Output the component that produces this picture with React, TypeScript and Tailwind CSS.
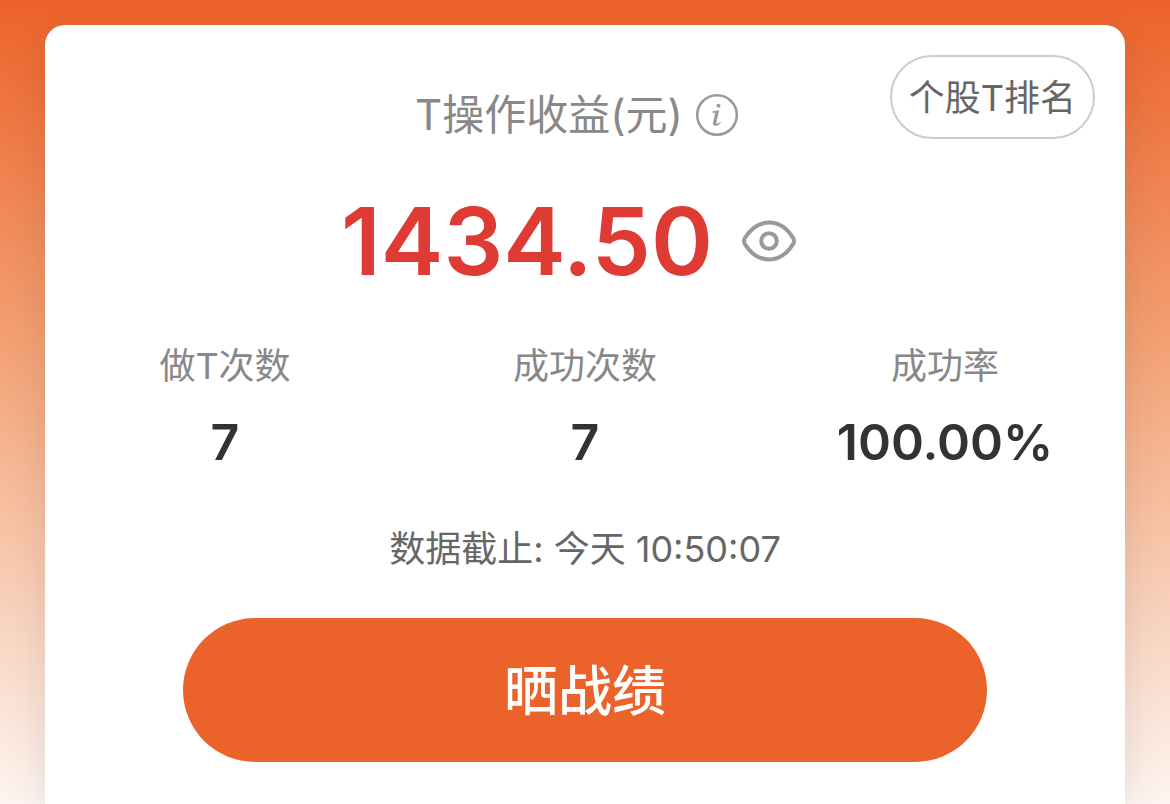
import type { ReactNode } from "react";

interface Stat {
    label: string;
    value: string;
}

const stats: Stat[] = [
    { label: "做T次数", value: "7" },
    { label: "成功次数", value: "7" },
    { label: "成功率", value: "100.00%" },
];

function IconButton({ label, children }: { label: string; children: ReactNode }) {
    return (
        <button type="button" aria-label={label} className="shrink-0">
            {children}
        </button>
    );
}

function InfoIcon() {
    return (
        <svg className="block size-11" viewBox="0 0 44 44" fill="none" aria-hidden="true">
            <circle cx="22" cy="22" r="19.800" stroke="#999" strokeWidth="2.500" />
            <circle cx="23.500" cy="12.800" r="2" fill="#999" />
            <path
                d="M17.500 19.500L18 18.300C20 18.300 22 18 23.800 17.600L21.200 29.500C21 30.700 21.500 31 22.300 30.800C23.300 30.600 24.300 30 25.200 29.300L25.500 30C23.900 31.600 22 32.600 20.300 32.600C18.500 32.600 17.900 31.500 18.300 29.700L20.300 20.500C20.500 19.500 20 19.400 17.500 19.500Z"
                fill="#999"
                stroke="#999"
                strokeWidth="0.500"
            />
        </svg>
    );
}

function EyeIcon() {
    return (
        <svg className="block h-11 w-14" viewBox="0 0 56 44" fill="none" stroke="#999" strokeWidth="4" aria-hidden="true">
            <path
                d="M3.600 19.600C9 10.500 17.500 3.600 28 3.600S47 10.500 52.400 19.600Q53.600 22 52.400 24.400C47 33.500 38.500 40.400 28 40.400S9 33.500 3.600 24.400Q2.400 22 3.600 19.600Z"
                strokeLinejoin="round"
            />
            <circle cx="28" cy="22" r="7.800" />
        </svg>
    );
}

export default function App() {
    return (
        <main className="min-h-screen bg-linear-to-b/srgb from-[#ed622a] via-[#f3a478] via-45% to-[#fdf5f1] px-[45px] pt-[25px] font-[Inter,'Noto_Sans_CJK_SC',sans-serif]">
            <section className="relative flex min-h-[779px] flex-col items-center rounded-t-[20px] bg-white pt-[60px] shadow-[0_8px_40px_rgba(0,0,0,0.1)]">
                <button
                    type="button"
                    className="absolute top-[30px] right-[30px] h-[84px] rounded-full border-2 border-[#ccc] px-[17px] pt-0.5 text-[36px] leading-none text-[#666]"
                >
                    个股T排名
                </button>

                <div className="flex items-center gap-3 pr-4 text-[#888]">
                    <h1 className="text-[42px] leading-[60px]">T操作收益(元)</h1>
                    <IconButton label="收益说明">
                        <InfoIcon />
                    </IconButton>
                </div>

                <div className="mt-[46px] flex items-center gap-7 pr-8">
                    <p className="text-[94px] leading-[100px] font-semibold text-[#de3b34]">1434.50</p>
                    <IconButton label="隐藏收益">
                        <EyeIcon />
                    </IconButton>
                </div>

                <dl className="mt-[49px] grid w-full grid-cols-3 text-center">
                    {stats.map((stat) => (
                        <div key={stat.label}>
                            <dt className="text-[36px] leading-[52px] text-[#888]">{stat.label}</dt>
                            <dd className="mt-[20px] text-[50px] leading-[60px] font-semibold text-[#333]">{stat.value}</dd>
                        </div>
                    ))}
                </dl>

                <p className="mt-[51px] text-[36px] leading-[52px] text-[#666]">数据截止: 今天 10:50:07</p>

                <button
                    type="button"
                    className="mx-[138px] mt-[43px] h-36 self-stretch rounded-full bg-[#ec622b] pt-1 text-[54px] leading-none font-medium text-white"
                >
                    晒战绩
                </button>
            </section>
        </main>
    );
}
